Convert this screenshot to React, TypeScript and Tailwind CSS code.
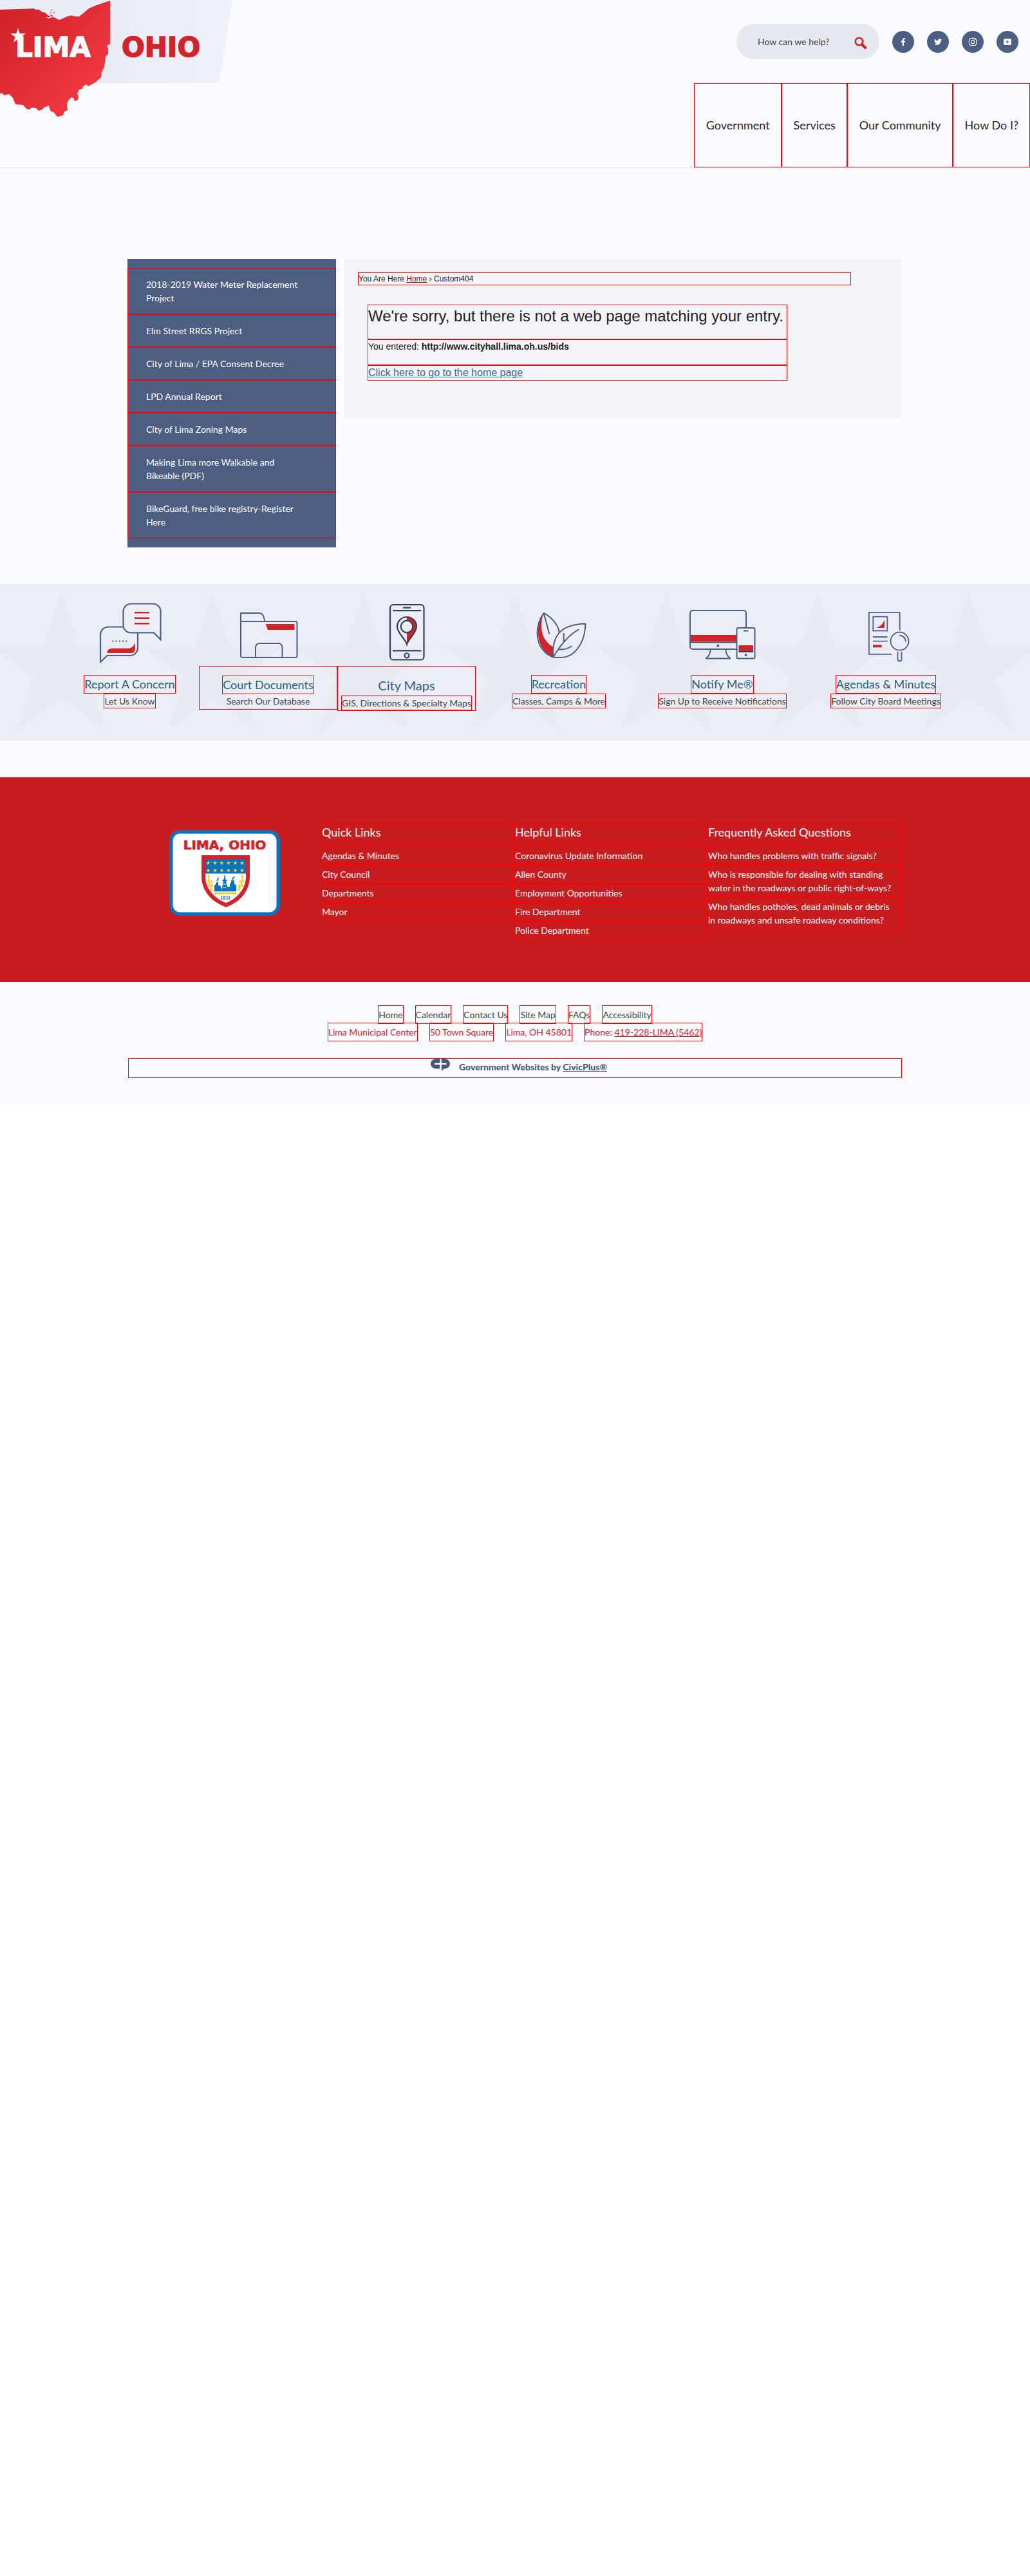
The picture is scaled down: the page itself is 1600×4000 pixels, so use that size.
import React from "react";
import { FaFacebookF, FaTwitter, FaInstagram } from "react-icons/fa";

const BOX = "border border-[#fb0007]";

const sideLinks = [
  "2018-2019 Water Meter Replacement Project",
  "Elm Street RRGS Project",
  "City of Lima / EPA Consent Decree",
  "LPD Annual Report",
  "City of Lima Zoning Maps",
  "Making Lima more Walkable and Bikeable (PDF)",
  "BikeGuard, free bike registry-Register Here",
];

const footerColumns = [
  { title: "Quick Links", links: ["Agendas & Minutes", "City Council", "Departments", "Mayor"] },
  {
    title: "Helpful Links",
    links: ["Coronavirus Update Information", "Allen County", "Employment Opportunities", "Fire Department", "Police Department"],
  },
  {
    title: "Frequently Asked Questions",
    links: [
      "Who handles problems with traffic signals?",
      "Who is responsible for dealing with standing water in the roadways or public right-of-ways?",
      "Who handles potholes, dead animals or debris in roadways and unsafe roadway conditions?",
    ],
  },
];

function starPoints(cx: number, cy: number, r: number, inner = 0.382) {
  return Array.from({ length: 10 }, (_, i) => {
    const a = (Math.PI / 5) * i - Math.PI / 2;
    const d = i % 2 ? r * inner : r;
    return `${(cx + d * Math.cos(a)).toFixed(1)},${(cy + d * Math.sin(a)).toFixed(1)}`;
  }).join(" ");
}

function Logo() {
  return (
    <svg className="block h-[183px] w-[361px] shrink-0" viewBox="0 0 361 183" role="img" aria-label="Lima Ohio">
      <defs>
        <linearGradient id="ohio" x1="0" y1="0" x2="1" y2="1">
          <stop offset="0.1" stopColor="#d2222a" />
          <stop offset="0.75" stopColor="#ee363f" />
        </linearGradient>
        <linearGradient id="banner" x1="0" y1="0" x2="1" y2="0">
          <stop offset="0.4" stopColor="#e8ecf4" />
          <stop offset="1" stopColor="#eef0fa" />
        </linearGradient>
      </defs>
      <path d="M0 0H361L340 129H0Z" fill="url(#banner)" />
      <path
        d="M0 15L53 13.3L55 15L60 14.8L66 19L70 19.5L75 24L80 27L83 25L70 27.5L76 28.5L83 26.5L87 28.5L92 31L97 29L103 26L111 24L116 25.5H123L130 20L138 13L150 8L162 4L171 1V69L166 70.5L168 76L168 84L164 88L163 96L162 104L158 112L157 120L148 128L137 134L134 131L129 134L128 138L123 139L120 145L122 150L121 155L116 157L114 152L111 151L106 156L104 162L105 171L100 173L98 179L89 181.5L84 175L78 172L76 164L68 167L66 170L60 172L56 168L50 167L45 170L41 169L36 163L24 162L20 152L14 146L7 148L2 144L0 146Z"
        fill="url(#ohio)"
      />
      <path d="M79 16l2-1M78 20l1.500-1M83 20l2-1M78 24l4-.5" stroke="#dd2a33" strokeWidth="1.300" />
      <polygon points={starPoints(28, 56, 12.5)} fill="#f9fbff" />
      <text x="24" y="88" fill="#f9fbff" stroke="#f9fbff" strokeWidth="1.500" className="font-['DejaVu_Sans'] text-[42px] font-bold">LIMA</text>
      <text x="189" y="88" fill="#d2222a" stroke="#d2222a" strokeWidth="1.500" className="font-['DejaVu_Sans'] text-[42px] font-bold">OHIO</text>
    </svg>
  );
}

function YoutubeMark() {
  return (
    <svg className="h-3 w-[14px]" viewBox="0 0 14 12" aria-hidden="true">
      <rect x="1" y="1" width="12" height="10" rx="2" fill="#fff" />
      <path d="M5.500 3.800V8.200L9.500 6Z" fill="#4c5f82" />
    </svg>
  );
}

const socials = [
  { name: "Facebook", icon: <FaFacebookF size={12} /> },
  { name: "Twitter", icon: <FaTwitter size={12} /> },
  { name: "Instagram", icon: <FaInstagram size={14} /> },
  { name: "YouTube", icon: <YoutubeMark /> },
];

function Header() {
  return (
    <header className="flex items-start justify-between border-b border-[#e7eaf5] bg-[#f9fbff]">
      <a href="#" className="block"><Logo /></a>
      <div className="flex flex-col items-end">
        <div className="flex items-center gap-5 pt-[37px] pr-[18px] pb-[37px]">
          <form className="flex h-[55px] w-[222px] items-center rounded-full bg-[#e7e9f1] pr-[19px] pl-[33px]">
            <input
              type="text"
              aria-label="Search"
              placeholder="How can we help?"
              className="min-w-0 flex-1 bg-transparent text-[14px] leading-[21px] text-[#444] placeholder-[#444] outline-none"
            />
            <button type="button" aria-label="Search">
              <svg className="mt-1 block size-5" viewBox="0 0 20 20" fill="none" stroke="#d2222a" aria-hidden="true">
                <circle cx="7.500" cy="7.500" r="5.800" strokeWidth="2.600" />
                <path d="M12 12L17 17" strokeWidth="4.500" strokeLinecap="round" />
              </svg>
            </button>
          </form>
          {socials.map((s) => (
            <a key={s.name} href="#" aria-label={s.name} className="flex size-[34px] items-center justify-center rounded-full bg-[#4c5f82] text-white">
              {s.icon}
            </a>
          ))}
        </div>
        <nav className="flex">
          {["Government", "Services", "Our Community", "How Do I?"].map((t) => (
            <a key={t} href="#" className={`${BOX} flex h-[131px] items-center pr-[17px] pl-[18px] text-[18px] leading-[27px] text-[#282828]`}>
              {t}
            </a>
          ))}
        </nav>
      </div>
    </header>
  );
}

function ErrorContent() {
  return (
    <section className="min-w-0 flex-1 bg-[#f3f4f9] px-[21px] pt-[21px] pb-[59px] font-['Liberation_Sans',sans-serif] text-[#222]">
      <div className={`${BOX} h-5 w-[766px] max-w-full text-[12px] leading-[18px]`}>
        You Are Here <a href="#" className="text-[#8b0f14] underline">Home</a> › Custom404
      </div>
      <div className="mt-[30px] ml-[15px] w-[652px] max-w-full">
        <h1 className={`${BOX} h-[54px] text-[24px] leading-[34px]`}>
          We're sorry, but there is not a web page matching your entry.
        </h1>
        <p className={`${BOX} h-10 text-[14px] leading-[20px]`}>
          You entered: <b>http://www.cityhall.lima.oh.us/bids</b>
        </p>
        <p className={`${BOX} h-6 text-[16px] leading-[22px]`}>
          <a href="#" className="text-[#336a9c] underline">Click here to go to the home page</a>
        </p>
      </div>
    </section>
  );
}

const icon = "mx-auto block h-[100px] w-[120px]";

function ChatIcon() {
  return (
    <svg className={icon} viewBox="0 0 120 100" fill="none" stroke="#4c5f82" strokeWidth="2.200" aria-hidden="true">
      <path d="M49 41.500H26a12 12 0 0 0-12 12V96L24.500 86H60a12 12 0 0 0 12-12V51" />
      <path d="M61 5.500H95.500a12 12 0 0 1 12 12V61L97 50.500H61.500a12 12 0 0 1-12-12V17.500a12 12 0 0 1 12-12Z" />
      <path d="M67 19.300H90M67 27.800H90M67 36.300H90" stroke="#d2222a" strokeWidth="2.600" />
      <path d="M32.500 63.700H55" strokeDasharray="2 3.200" />
      <path d="M24.200 82C24.500 77 28 74.700 33 74.700H57C63 74.700 67 70 67.800 65V76C67.800 80 65 82 61 82Z" fill="#d2222a" stroke="none" />
    </svg>
  );
}

function FolderIcon() {
  return (
    <svg className={icon} viewBox="0 0 120 100" fill="none" stroke="#4c5f82" strokeWidth="2" aria-hidden="true">
      <path d="M17 33H102a2.500 2.500 0 0 1 2.500 2.500V86.500a2.500 2.500 0 0 1-2.500 2.500H19.500a2.500 2.500 0 0 1-2.500-2.500V20H46C52 20 53 27 54.500 33" />
      <path d="M40 89V73a6 6 0 0 1 6-6H75.500a6 6 0 0 1 6 6V89" />
      <path d="M55.800 37H100.500V46H58.800Z" fill="#d2222a" stroke="none" />
    </svg>
  );
}

function MapIcon() {
  return (
    <svg className={icon} viewBox="0 0 120 100" fill="none" stroke="#344055" strokeWidth="2.200" aria-hidden="true">
      <rect x="34" y="7" width="52.500" height="85.500" rx="5" />
      <path d="M38 16.200H82.300M54 11.700H66.200M38 78.400H82.300" />
      <circle cx="60" cy="86" r="3.500" />
      <path d="M60 26.500a14.500 14.500 0 0 1 14.500 14.500C74.500 51 65 58 60 68Z" fill="#d2222a" stroke="none" />
      <path d="M60 68.500C56.500 58 45 51 45 41a15 15 0 0 1 30 0C75 51 63.500 58 60 68.500Z" />
      <circle cx="60" cy="41" r="9.300" fill="#ebedf6" />
    </svg>
  );
}

function LeafIcon() {
  return (
    <svg className={icon} viewBox="0 0 120 100" fill="none" stroke="#4c5f82" strokeWidth="2" strokeLinejoin="round" aria-hidden="true">
      <path d="M36.500 20C25 37 24 62 38 79C42 83.500 46 86.500 51 88.500L52 73C38 66 27 48 36.500 20Z" fill="#d2222a" stroke="none" />
      <path d="M61 51C59 37 48 26 36.700 19.800C23 39 23 66 38 80C42 84 46 87 51.300 88.500" />
      <path d="M36.700 20L45.300 52.500" />
      <path d="M51.300 88.500C50 71 53 56 65 46.500C75 39 87 37 101.500 36.500C101 58 93 75 80 84C71 90 61 89.500 51.300 88.500Z" />
      <path d="M51.300 88.500C63 69 76 53 91.300 45.300M67.700 51V65M59.700 76.300C67 77 75 75 80.300 71" />
    </svg>
  );
}

function NotifyIcon() {
  return (
    <svg className={icon} viewBox="0 0 120 100" fill="none" stroke="#4c5f82" strokeWidth="2" aria-hidden="true">
      <path d="M11 54H82V64.500H11Z" fill="#d2222a" stroke="none" />
      <path d="M97 42V20a4 4 0 0 0-4-4H14a4 4 0 0 0-4 4V72a4 4 0 0 0 4 4H82M10 65.500H82" />
      <circle cx="53.300" cy="70.700" r="2.100" fill="#4c5f82" stroke="none" />
      <path d="M41.500 76C41.500 83 39.500 87 35 89.500V90.500H72V89.500C67.500 87 65.500 83 65.500 76" />
      <rect x="82.500" y="43" width="28" height="47.500" rx="2.500" />
      <path d="M93 47.500H100.500" />
      <path d="M85.500 70H108V79H85.500Z" fill="#d2222a" stroke="none" />
      <path d="M85.500 80H108" stroke="#344055" />
      <circle cx="96.700" cy="85" r="2" fill="#4c5f82" stroke="none" />
    </svg>
  );
}

function AgendaIcon() {
  return (
    <svg className={icon} viewBox="0 0 120 100" fill="none" stroke="#4c5f82" strokeWidth="1.800" aria-hidden="true">
      <path d="M81.700 47V18.900H33.900V83.900H69.300" />
      <rect x="40.300" y="25.500" width="22" height="22" />
      <path d="M45 43C52 41 56 36 58 30V43Z" fill="#d2222a" stroke="none" />
      <path d="M40 57H62.500M40 63.700H62.500" />
      <path d="M40 69.300H53.700V73.300H40Z" fill="#d2222a" stroke="none" />
      <circle cx="81.500" cy="63.700" r="14" />
      <path d="M80.700 54.500C87 55 90.500 59 91 64.500" />
      <path d="M78.500 80V91.500a3 3 0 0 0 6 0V80" />
    </svg>
  );
}

const quick = [
  { title: "Report A Concern", sub: "Let Us Know", icon: <ChatIcon />, wrap: "border-transparent pt-[13px]", t: BOX, s: BOX, size: "text-[18px]" },
  { title: "Court Documents", sub: "Search Our Database", icon: <FolderIcon />, wrap: "border-[#fb0007] pt-[14px]", t: BOX, s: "", size: "text-[18px]" },
  { title: "City Maps", sub: "GIS, Directions & Specialty Maps", icon: <MapIcon />, wrap: "border-[#fb0007] pt-4", t: "", s: BOX, size: "text-[20px]" },
  { title: "Recreation", sub: "Classes, Camps & More", icon: <LeafIcon />, wrap: "border-transparent pt-[13px]", t: BOX, s: BOX, size: "text-[18px]" },
  { title: "Notify Me®", sub: "Sign Up to Receive Notifications", icon: <NotifyIcon />, wrap: "border-transparent pt-[13px]", t: BOX, s: BOX, size: "text-[18px]" },
  { title: "Agendas & Minutes", sub: "Follow City Board Meetings", icon: <AgendaIcon />, wrap: "border-transparent pt-[13px]", t: BOX, s: BOX, size: "text-[18px]" },
];

function QuickBar() {
  return (
    <section className="relative mt-[57px] bg-[#ebeef6]">
      <svg className="absolute inset-0 h-full w-full" aria-hidden="true">
        <defs>
          <pattern id="stars" patternUnits="userSpaceOnUse" x="50%" y="0" width="235" height="243">
            <polygon points={starPoints(0, 132, 119)} fill="#e8ebf3" />
            <polygon points={starPoints(235, 132, 119)} fill="#e8ebf3" />
          </pattern>
        </defs>
        <rect width="100%" height="100%" fill="url(#stars)" />
      </svg>
      <div className="relative mx-auto grid min-h-[243px] max-w-[1412px] grid-cols-[215fr_215fr_215fr_258fr_250fr_258fr] pt-[25px] pr-px">
        {quick.map((q) => (
          <a key={q.title} href="#" className="block text-center">
            {q.icon}
            <div className={`mt-0.5 flex flex-col items-center border ${q.wrap}`}>
              <span className={`${q.t} block h-[29px] leading-[27px] whitespace-nowrap text-[#2f5d7e] ${q.size}`}>{q.title}</span>
              <span className={`${q.s} block h-[23px] text-[14px] leading-[21px] whitespace-nowrap text-[#444]`}>{q.sub}</span>
            </div>
          </a>
        ))}
      </div>
    </section>
  );
}

function Seal() {
  return (
    <svg className="mx-auto mt-[11px] block h-[133px] w-[172px]" viewBox="0 0 172 133" role="img" aria-label="Lima, Ohio 1831">
      <rect x="2.750" y="2.750" width="166.500" height="127.500" rx="14" fill="#fff" stroke="#0574bc" strokeWidth="5.500" />
      <text x="86" y="29.500" textAnchor="middle" fill="#d2222a" stroke="#d2222a" strokeWidth="0.700" className="font-['DejaVu_Sans'] text-[20px] font-bold">LIMA, OHIO</text>
      <path d="M50 39H125V72C125 97 107 113 88 119.500C69 113 50 97 50 72Z" fill="#d2222a" />
      <path d="M56 45H119V72C119 92 104 107 88 113C72 107 56 92 56 72Z" fill="#fff" />
      <path d="M56 45H119V67.500H56Z" fill="#0574bc" />
      {[60.5, 71, 81.500, 92, 102.500, 113].map((x) => (
        <g key={x} fill="#f6d02f">
          <polygon points={starPoints(x, 51.200, 3.600)} />
          <polygon points={starPoints(x, 62.600, 3.600)} />
        </g>
      ))}
      <path d="M70 95.300V86L72.500 84L73 81H76V86H79L81.500 92L84 79H82.500V77H84.500L85.500 70L86.500 70L87.500 77H89.500V79H88L90 88H94V83L96 82V78H101V83L104 86V95.300Z" fill="#0574bc" />
      <path d="M84 84h4M83.500 89h5" stroke="#fff" />
      <path d="M74 79L76.500 74M97.500 77L101 72" stroke="#0574bc" strokeWidth="1.800" />
      <path d="M70 96.500H104V99.700H70Z" fill="#f6d02f" />
      <path d="M61.500 72C61 82 63 89 67.500 94M113.500 72C114 82 111 89 106 94" fill="none" stroke="#f6d02f" strokeWidth="1.300" />
      {[[61, 72], [60.5, 79], [65, 80], [62, 86], [66, 86], [65, 92], [113.500, 72], [114, 79], [110, 80], [113, 86], [108.500, 87], [108, 92]].map(([x, y]) => (
        <ellipse key={`${x}-${y}`} cx={x} cy={y} rx="1.700" ry="2.700" fill="#f6d02f" />
      ))}
      <text x="87" y="107.500" textAnchor="middle" fill="#0574bc" className="font-['Liberation_Serif'] text-[8px] font-bold">1831</text>
    </svg>
  );
}

function Footer() {
  return (
    <footer>
      <div className="mt-[57px] bg-[#c81c1f] pt-[71px] pb-[66px] text-white">
        <div className="mx-auto grid max-w-[1202px] grid-cols-4 pr-0.5">
          <Seal />
          {footerColumns.map((c) => (
            <div key={c.title}>
              <h2 className={`${BOX} text-[18px] leading-[27px]`}>{c.title}</h2>
              <ul className="mt-[7px]">
                {c.links.map((l) => (
                  <li key={l} className={`${BOX} py-[3px] pr-3 text-[14px] leading-[21px]`}>
                    <a href="#">{l}</a>
                  </li>
                ))}
              </ul>
            </div>
          ))}
        </div>
      </div>
      <div className="mx-auto max-w-[1202px] pt-9 pb-[41px] text-[14px] leading-[27px]">
        <ul className="relative flex justify-center gap-[18px] text-[#444]">
          {["Home", "Calendar", "Contact Us", "Site Map", "FAQs", "Accessibility"].map((t) => (
            <li key={t} className={BOX}><a href="#">{t}</a></li>
          ))}
        </ul>
        <ul className="-mt-0.5 flex justify-center gap-[18px] text-[#d2222a]">
          <li className={BOX}>Lima Municipal Center</li>
          <li className={BOX}>50 Town Square</li>
          <li className={BOX}>Lima, OH 45801</li>
          <li className={BOX}>Phone: <a href="#" className="underline">419-228-LIMA (5462)</a></li>
        </ul>
        <div className={`${BOX} mt-[26px] flex h-[31px] items-start justify-center gap-[14px] pl-3 font-black text-[#44587a]`}>
          <svg className="h-[19px] w-[30px]" viewBox="0 0 30 19" aria-hidden="true">
            <path d="M10 0H20C26 0 30 3.500 30 8C30 12.500 26 15.500 21 15.500L17 19V15.500H10C4 15.500 0 12.500 0 8C0 3.500 4 0 10 0Z" fill="#44587a" />
            <path d="M15.500 0V16M6 8H24.500" stroke="#fbfcff" strokeWidth="2.600" />
          </svg>
          <span className="leading-[25px]">Government Websites by <a href="#" className="underline">CivicPlus®</a></span>
        </div>
      </div>
    </footer>
  );
}

export default function App() {
  return (
    <div className="bg-[#fbfcff] font-[Lato,sans-serif]">
      <Header />
      <main>
        <div className="mx-auto mt-[141px] flex max-w-[1204px] items-start gap-[13px] pr-0.5">
          <nav className="w-[324px] shrink-0 bg-[#4c5f82] py-[14px] text-[14px] leading-[21px] text-white">
            {sideLinks.map((l) => (
              <a key={l} href="#" className={`${BOX} block py-[14px] pr-12 pl-7`}>{l}</a>
            ))}
          </nav>
          <ErrorContent />
        </div>
        <QuickBar />
      </main>
      <Footer />
    </div>
  );
}
